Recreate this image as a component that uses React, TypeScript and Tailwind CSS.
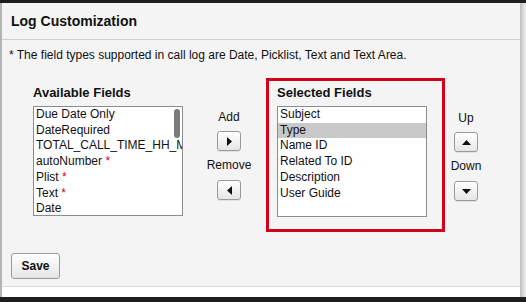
import React from "react";

const availableFields: { label: string; required?: boolean }[] = [
  { label: "Due Date Only" },
  { label: "DateRequired" },
  { label: "TOTAL_CALL_TIME_HH_MM" },
  { label: "autoNumber", required: true },
  { label: "Plist", required: true },
  { label: "Text", required: true },
  { label: "Date" },
  { label: "Text Area", required: true },
];

const selectedFields = ["Subject", "Type", "Name ID", "Related To ID", "Description", "User Guide"];

const Arrow = ({ dir }: { dir: "left" | "right" | "up" | "down" }) => {
  const points = {
    right: "2,0 7,4.5 2,9",
    left: "7,0 2,4.5 7,9",
    up: "0,7 4.5,2 9,7",
    down: "0,2 4.5,7 9,2",
  }[dir];
  return (
    <svg width="9" height="9" viewBox="0 0 9 9">
      <polygon points={points} fill="#111" />
    </svg>
  );
};

const SmallButton = ({ dir }: { dir: "left" | "right" | "up" | "down" }) => (
  <button className="w-[24px] h-[20px] flex items-center justify-center rounded-[3px] border border-[#9a9a9a] bg-gradient-to-b from-white to-[#e6e6e6] shadow-[0_1px_0_rgba(0,0,0,0.08)]">
    <Arrow dir={dir} />
  </button>
);

export default function App() {
  return (
    <div className="w-[526px] h-[302px] bg-white overflow-hidden flex flex-col text-[#111] font-['Liberation_Sans',Arial,sans-serif]">
      <div className="h-[3px] bg-[#1e1e1e] shrink-0" />
      <div className="flex flex-1 min-h-0">
        <div className="w-[2px] bg-[#b4b4b4] shrink-0" />
        <div className="w-[518px] flex flex-col">
          <div className="h-[37px] bg-[#f4f4f4] border-b border-[#cfcfcf] flex items-center pl-[9px]">
            <h1 className="text-[14px] font-bold leading-none">Log Customization</h1>
          </div>
          <div className="h-[247px] bg-[#f4f4f4] border-b border-[#dcdcdc] flex flex-col">
            <p className="text-[12px] leading-[14px] pl-[7px] pt-[8px]">
              * The field types supported in call log are Date, Picklist, Text and Text Area.
            </p>

            <div className="flex items-start mt-[16px]">
              {/* available */}
              <div className="ml-[31px] w-[150px] pt-[8px]">
                <h2 className="text-[13px] font-bold leading-[14px] mb-[6px]">Available Fields</h2>
                <div className="relative h-[110px] border border-[#8c8c8c] bg-white overflow-hidden">
                  {availableFields.map((f) => (
                    <div key={f.label} className="text-[12px] leading-[15.7px] pl-[2px] whitespace-nowrap">
                      {f.label}
                      {f.required && <span className="text-[#d0021b]"> *</span>}
                    </div>
                  ))}
                  <div className="absolute right-[2px] top-[2px] w-[6px] h-[29px] rounded-full bg-[#7a7a7a]" />
                </div>
              </div>

              {/* add / remove */}
              <div className="ml-[17px] w-[58px] flex flex-col items-center pt-[32px]">
                <span className="text-[12px] leading-[14px]">Add</span>
                <div className="mt-[7px]">
                  <SmallButton dir="right" />
                </div>
                <span className="text-[12px] leading-[14px] mt-[7px]">Remove</span>
                <div className="mt-[8px]">
                  <SmallButton dir="left" />
                </div>
              </div>

              {/* selected */}
              <div className="ml-[8px] w-[179px] h-[154px] border-[3px] border-[#d0021b] pl-[8px] pt-[5px]">
                <h2 className="text-[13px] font-bold leading-[14px] mb-[6px]">Selected Fields</h2>
                <div className="w-[150px] h-[111px] border border-[#8c8c8c] bg-white overflow-hidden">
                  {selectedFields.map((f) => (
                    <div
                      key={f}
                      className={`text-[12px] leading-[15.7px] pl-[2px] whitespace-nowrap ${f === "Type" ? "bg-[#c9c9c9]" : ""}`}
                    >
                      {f}
                    </div>
                  ))}
                </div>
              </div>

              {/* up / down */}
              <div className="ml-[1px] w-[40px] flex flex-col items-center pt-[33px]">
                <span className="text-[12px] leading-[14px]">Up</span>
                <div className="mt-[7px]">
                  <SmallButton dir="up" />
                </div>
                <span className="text-[12px] leading-[14px] mt-[7px]">Down</span>
                <div className="mt-[8px]">
                  <SmallButton dir="down" />
                </div>
              </div>
            </div>

            <div className="mt-auto mb-[7px] pl-[9px]">
              <button className="w-[49px] h-[26px] rounded-[3px] border border-[#9a9a9a] bg-gradient-to-b from-white to-[#e6e6e6] text-[12px] font-bold leading-none">
                Save
              </button>
            </div>
          </div>
          <div className="h-[10px] bg-white" />
        </div>
        <div className="w-[6px] bg-gradient-to-r from-[#bdbdbd] to-[#f2f2f2] shrink-0" />
      </div>
      <div className="h-[5px] bg-[#1e1e1e] shrink-0" />
    </div>
  );
}
